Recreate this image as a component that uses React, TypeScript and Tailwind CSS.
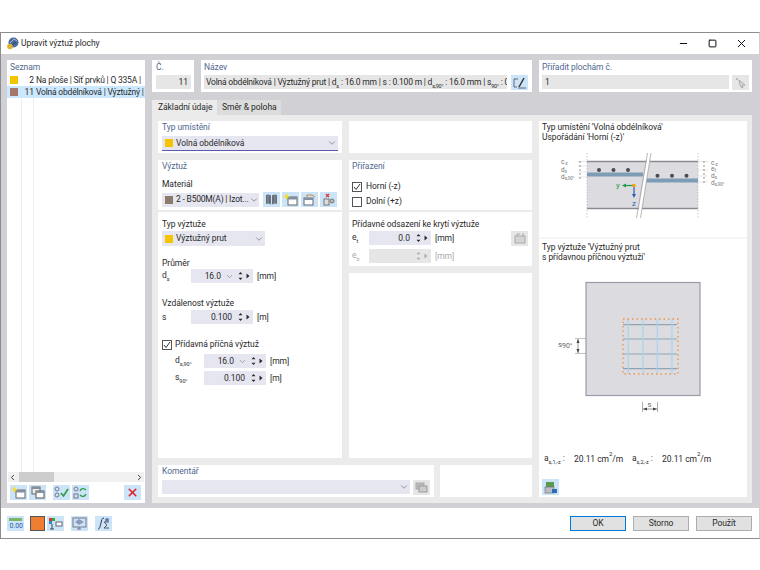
import { ReactNode } from "react";
import { ChevronDown, ChevronLeft, ChevronRight, Minus, Square, X } from "lucide-react";

const Sub = ({ children }: { children: ReactNode }) => (
  <sub className="text-[5.5px] leading-none align-[-2px]">{children}</sub>
);

const Label = ({ children, className = "" }: { children: ReactNode; className?: string }) => (
  <div className={`text-[#50688f] leading-[12px] ${className}`}>{children}</div>
);

const Card = ({ children, className = "" }: { children?: ReactNode; className?: string }) => (
  <div className={`bg-white ${className}`}>{children}</div>
);

const Swatch = ({ color, size = "w-[8px] h-[8px]" }: { color: string; size?: string }) => (
  <span className={`inline-block shrink-0 ${size}`} style={{ backgroundColor: color }} />
);

function Select({ color, text, className = "" }: { color?: string; text?: string; className?: string }) {
  return (
    <div className={`flex items-center bg-[#e6e6f0] pl-[3px] pr-[1px] ${className}`}>
      {color && <Swatch color={color} />}
      <span className="ml-[3px] flex-1 whitespace-nowrap">{text}</span>
      <ChevronDown size={10} strokeWidth={1.4} className="text-[#555] shrink-0" />
    </div>
  );
}

function Spin({ value, dropdown, disabled, className = "" }: { value: string; dropdown?: boolean; disabled?: boolean; className?: string }) {
  const tone = disabled ? "text-[#aaa]" : "text-[#2a2a2a]";
  return (
    <div className={`flex items-center justify-end h-[14px] w-[62px] ${disabled ? "bg-[#e6e6e6]" : "bg-[#e6e6f0]"} ${tone} ${className}`}>
      <span className={dropdown ? "mr-[4px]" : "mr-[6px]"}>{value}</span>
      {dropdown && <ChevronDown size={9} strokeWidth={1.4} className="mr-[4px] text-[#666]" />}
      <svg width="5" height="10" viewBox="0 0 5 10" className="mr-[3px]" fill="currentColor">
        <path d="M2.500 1 L4.500 3.200 H.5Z M2.500 9 L4.500 6.800 H.5Z" />
      </svg>
      <svg width="4" height="6" viewBox="0 0 4 6" className="mr-[3px]" fill="currentColor">
        <path d="M.5 .5 L3.500 3 L.5 5.500Z" />
      </svg>
    </div>
  );
}

function Check({ checked }: { checked?: boolean }) {
  return (
    <span className="w-[10px] h-[10px] border border-[#555] bg-white shrink-0 flex items-center justify-center">
      {checked && (
        <svg width="8" height="8" viewBox="0 0 8 8" fill="none" stroke="#333" strokeWidth="1">
          <path d="M1 4 L3 6.500 L7 1" />
        </svg>
      )}
    </span>
  );
}

const IconBtn = ({ children, gray, className = "" }: { children: ReactNode; gray?: boolean; className?: string }) => (
  <span className={`flex items-center justify-center shrink-0 w-[17px] h-[15px] ${gray ? "bg-[#e6e6e6]" : "bg-[#cce4f7]"} ${className}`}>
    {children}
  </span>
);

const NewWin = () => (
  <svg width="15" height="13" viewBox="0 0 15 13">
    <rect x="5" y="4" width="9" height="8" fill="#fff" stroke="#666" />
    <rect x="5" y="4" width="9" height="2.500" fill="#8490a0" />
    <path d="M3.500 0 L4.500 2.500 L7 3.500 L4.500 4.500 L3.500 7 L2.500 4.500 L0 3.500 L2.500 2.500Z" fill="#f7dc2a" />
  </svg>
);
const CopyWin = () => (
  <svg width="14" height="13" viewBox="0 0 14 13">
    <rect x="1" y="1" width="8" height="7" fill="#eee" stroke="#666" />
    <rect x="1" y="1" width="8" height="2" fill="#8490a0" />
    <rect x="5" y="5" width="8" height="7" fill="#fff" stroke="#555" />
    <rect x="5" y="5" width="8" height="2" fill="#8490a0" />
  </svg>
);
const SetCheck = () => (
  <svg width="15" height="13" viewBox="0 0 15 13" fill="none">
    <circle cx="3" cy="3" r="2" stroke="#778" />
    <circle cx="3" cy="9" r="2" stroke="#778" />
    <path d="M7 7 L9.500 10 L14 3" stroke="#2c9c3c" strokeWidth="1.6" />
  </svg>
);
const SetSwap = () => (
  <svg width="15" height="13" viewBox="0 0 15 13" fill="none">
    <circle cx="3" cy="3" r="2" stroke="#778" />
    <rect x="1" y="8" width="4" height="4" stroke="#778" />
    <path d="M7 5 C8 2 11 2 13 4 M13 8 C12 11 9 11 7 9" stroke="#2c9c3c" strokeWidth="1.3" />
  </svg>
);
const Book = () => (
  <svg width="13" height="11" viewBox="0 0 13 11">
    <path d="M1 1 Q3.500 0 6 1.500 V10.500 Q3.500 9 1 10Z M7 1.500 Q9.500 0 12 1 V10 Q9.500 9 7 10.500Z" fill="#666e7a" />
    <path d="M3 1 V9.500 M10 1 V9.500" stroke="#9aa2ae" strokeWidth=".7" />
  </svg>
);
const EditBox = () => (
  <svg width="14" height="12" viewBox="0 0 14 12" fill="none">
    <path d="M5 2 H1 V10 H4" stroke="#667" />
    <path d="M6 10 L11 1" stroke="#333" strokeWidth="1.500" />
    <path d="M5 11 H13" stroke="#667" />
  </svg>
);
const Tool = () => (
  <svg width="13" height="12" viewBox="0 0 13 12">
    <rect x="1" y="4" width="9" height="7" fill="#fff" stroke="#667" />
    <rect x="1" y="4" width="9" height="2" fill="#8490a0" />
    <path d="M4 3 V1 H9 L12 3" stroke="#c88a3a" fill="none" />
  </svg>
);
const XTool = () => (
  <svg width="13" height="13" viewBox="0 0 13 13">
    <path d="M4 1 L7 4 M7 1 L4 4" stroke="#d33" strokeWidth="1.200" />
    <rect x="2" y="6" width="5" height="6" fill="#ddd" stroke="#777" />
    <circle cx="10" cy="8" r="2" fill="#bbb" stroke="#777" />
  </svg>
);
const GrayStack = () => (
  <svg width="13" height="11" viewBox="0 0 13 11">
    <rect x="1" y="1" width="8" height="6" fill="#bbb" stroke="#aaa" />
    <rect x="4" y="4" width="8" height="6" fill="#ccc" stroke="#999" />
  </svg>
);
const GrayTool = () => (
  <svg width="12" height="12" viewBox="0 0 12 12">
    <rect x="1" y="4" width="10" height="7" fill="#d4d4d4" stroke="#aaa" />
    <path d="M3 4 V2 H6 M9 4 V1" stroke="#aaa" fill="none" />
  </svg>
);
const GrayPointer = () => (
  <svg width="12" height="12" viewBox="0 0 12 12">
    <path d="M1 1 L3 3 M3 1 L1 3" stroke="#bbb" />
    <path d="M4 3 L10 8 L7 8.500 L8 11 L6 10 L5 8Z" fill="#d8d8d8" stroke="#aaa" />
  </svg>
);

function List() {
  const rows = [
    { color: "#f5c400", no: "2", text: "Na ploše | Síť prvků | Q 335A |", sel: false },
    { color: "#a5776a", no: "11", text: "Volná obdélníková | Výztužný |", sel: true },
  ];
  return (
    <Card className="w-[138px] flex flex-col">
      <Label className="pl-[3px] h-[14px] flex items-center">Seznam</Label>
      <div className="flex-1 flex flex-col relative overflow-hidden">
        {rows.map((r) => (
          <div key={r.no} className={`flex items-center h-[12px] shrink-0 ${r.sel ? "bg-[#cce8ff]" : ""}`}>
            <span className="w-[15px] pl-[3px] flex"><Swatch color={r.color} /></span>
            <span className="w-[12px] text-right">{r.no}</span>
            <span className="ml-[2px] whitespace-nowrap flex-1 tracking-[-0.2px]">{r.text}</span>
          </div>
        ))}
        <div className="flex-1 flex">
          <span className="w-[15px] border-r border-[#eee]" />
          <span className="w-[12px] border-r border-[#eee]" />
        </div>
      </div>
      <div className="flex items-center h-[10px] bg-[#f0f0f0] mx-px justify-between">
        <ChevronLeft size={9} strokeWidth={2.500} className="text-[#333]" />
        <span className="w-[35px] h-full bg-[#cdcdcd] mr-auto ml-[2px]" />
        <ChevronRight size={9} strokeWidth={2.500} className="text-[#333]" />
      </div>
      <div className="flex items-center h-[21px] px-[3px] gap-[2px]">
        <IconBtn><NewWin /></IconBtn>
        <IconBtn><CopyWin /></IconBtn>
        <IconBtn className="ml-[5px]"><SetCheck /></IconBtn>
        <IconBtn><SetSwap /></IconBtn>
        <IconBtn className="ml-auto mr-[1px]"><X size={13} strokeWidth={3} className="text-[#e0202a]" /></IconBtn>
      </div>
    </Card>
  );
}

function HeaderRow() {
  return (
    <div className="flex gap-[7px] h-[32px] pr-[7px]">
      <Card className="w-[42px] px-[4px]">
        <div className="text-[#50688f] leading-[14px] h-[15px]">Č.</div>
        <div className="bg-[#e6e6e6] h-[14px] leading-[14px] text-right pr-[3px] mr-[-1px]">11</div>
      </Card>
      <Card className="w-[331px] pl-[3px] pr-[4px]">
        <div className="text-[#50688f] leading-[14px] h-[15px]">Název</div>
        <div className="flex gap-[4px]">
          <div className="flex-1 min-w-0 bg-[#e6e6e6] h-[14px] leading-[14px] pl-[2px] whitespace-nowrap overflow-hidden tracking-[-0.2px]">
            Volná obdélníková | Výztužný prut | d<Sub>s</Sub> : 16.0 mm | s : 0.100 m | d<Sub>s,90°</Sub> : 16.0 mm | s<Sub>90°</Sub> : 0
          </div>
          <IconBtn className="h-[14px]"><EditBox /></IconBtn>
        </div>
      </Card>
      <Card className="flex-1 px-[3px]">
        <div className="text-[#50688f] leading-[14px] h-[15px]">Přiřadit plochám č.</div>
        <div className="flex gap-[3px]">
          <div className="flex-1 bg-[#e6e6e6] h-[14px] leading-[14px] pl-[3px]">1</div>
          <IconBtn gray className="h-[14px]"><GrayPointer /></IconBtn>
        </div>
      </Card>
    </div>
  );
}

function LeftColumn() {
  return (
    <div className="w-[184px] flex flex-col">
      <Card className="h-[32px] px-[4px]">
        <Label className="h-[15px]">Typ umístění</Label>
        <Select color="#f5c400" text="Volná obdélníková" className="h-[15px] border-b border-[#5a5aa8]" />
      </Card>
      <Card className="h-[50px] mt-[7px] px-[4px]">
        <Label className="h-[18px]">Výztuž</Label>
        <div className="leading-[12px] h-[14px]">Materiál</div>
        <div className="flex items-center gap-[2px]">
          <Select color="#8c7b6b" text="2 - B500M(A) | Izot..." className="w-[97px] h-[14px] mr-[2px] tracking-[-0.2px]" />
          <IconBtn className="h-[14px]"><Book /></IconBtn>
          <IconBtn className="h-[14px]"><NewWin /></IconBtn>
          <IconBtn className="h-[14px]"><Tool /></IconBtn>
          <IconBtn className="h-[14px]"><XTool /></IconBtn>
        </div>
      </Card>
      <Card className="flex-1 mt-[2px] px-[4px] pt-[5px]">
        <div className="leading-[14px] h-[14px]">Typ výztuže</div>
        <Select color="#f5c400" text="Výztužný prut" className="w-[103px] h-[15px]" />
        <div className="leading-[14px] mt-[10px] h-[13px]">Průměr</div>
        <div className="flex items-center h-[14px]">
          <span className="w-[29px]">d<Sub>s</Sub></span>
          <Spin value="16.0" dropdown />
          <span className="ml-[4px]">[mm]</span>
        </div>
        <div className="leading-[14px] mt-[13px] h-[14px]">Vzdálenost výztuže</div>
        <div className="flex items-center h-[14px]">
          <span className="w-[29px]">s</span>
          <Spin value="0.100" />
          <span className="ml-[4px]">[m]</span>
        </div>
        <div className="flex items-center gap-[3px] mt-[15px] h-[11px]">
          <Check checked />
          <span>Přídavná příčná výztuž</span>
        </div>
        <div className="flex items-center h-[14px] mt-[4px] pl-[13px]">
          <span className="w-[29px]">d<Sub>s,90°</Sub></span>
          <Spin value="16.0" dropdown />
          <span className="ml-[4px]">[mm]</span>
        </div>
        <div className="flex items-center h-[14px] mt-[3px] pl-[13px]">
          <span className="w-[29px]">s<Sub>90°</Sub></span>
          <Spin value="0.100" />
          <span className="ml-[4px]">[m]</span>
        </div>
      </Card>
    </div>
  );
}

function MiddleColumn() {
  return (
    <div className="w-[183px] flex flex-col">
      <Card className="h-[32px]" />
      <Card className="h-[50px] mt-[7px] px-[3px]">
        <Label className="h-[21px]">Přiřazení</Label>
        <div className="flex items-center gap-[4px] h-[11px]">
          <Check checked />
          <span>Horní (-z)</span>
        </div>
        <div className="flex items-center gap-[4px] h-[11px] mt-[4px]">
          <Check />
          <span>Dolní (+z)</span>
        </div>
      </Card>
      <Card className="h-[54px] mt-[2px] px-[3px] pt-[5px]">
        <div className="leading-[14px] h-[14px]">Přídavné odsazení ke krytí výztuže</div>
        <div className="flex items-center h-[14px]">
          <span className="w-[17px]">e<Sub>t</Sub></span>
          <Spin value="0.0" />
          <span className="ml-[4px]">[mm]</span>
          <IconBtn gray className="h-[14px] ml-auto mr-[1px]"><GrayTool /></IconBtn>
        </div>
        <div className="flex items-center h-[14px] mt-[4px] text-[#aaa]">
          <span className="w-[17px]">e<Sub>b</Sub></span>
          <Spin value="" disabled />
          <span className="ml-[4px]">[mm]</span>
        </div>
      </Card>
      <Card className="flex-1 mt-[7px]" />
    </div>
  );
}

function BeamDrawing() {
  return (
    <svg width="208" height="72" viewBox="539 150 208 72" className="block mx-auto">
      <rect x="587" y="161" width="111" height="48" fill="#dcdce0" />
      <path d="M587 161.500 H698 M587 208.500 H698" stroke="#8a8a93" strokeWidth="1.400" />
      <path d="M587 153 V218 M698 153 V218" stroke="#aaa" strokeWidth=".6" strokeDasharray="1.500 1.500" />
      <path d="M578 161.500 H587 M578 166 H587 M578 172 H587 M578 177 H587" stroke="#ccc" strokeWidth=".5" />
      <path d="M698 161.500 H708 M698 170 H708 M698 176 H708 M698 182 H708" stroke="#ccc" strokeWidth=".5" />
      <path d="M580 161 V180 M704 161 V184" stroke="#666" strokeWidth=".7" strokeDasharray="2 2" />
      <rect x="587" y="172.500" width="56" height="4" fill="#7f9cb6" />
      <rect x="645" y="178.500" width="53" height="4" fill="#7f9cb6" />
      {[599, 613.5, 628].map((x) => (
        <circle key={x} cx={x} cy="170" r="2" fill="#4a4a58" />
      ))}
      {[657.5, 672, 686.5].map((x) => (
        <circle key={x} cx={x} cy="175.700" r="2" fill="#4a4a58" />
      ))}
      <path d="M648 153 L637.500 218 H640.500 L651 153Z" fill="#fff" />
      <path d="M647.500 153 L636.500 218 M651 153 L640.500 218" stroke="#999" strokeWidth=".7" />
      <path d="M633 185.500 H625" stroke="#1c9a4a" strokeWidth="1.200" />
      <path d="M622 185.500 L626 183.500 V187.500Z" fill="#1c9a4a" />
      <path d="M634 186 V195" stroke="#2c5fb8" strokeWidth="1.200" />
      <path d="M634 198 L632 194 H636Z" fill="#2c5fb8" />
      <rect x="632.500" y="184" width="3" height="3" fill="#f5a400" />
      <text x="616" y="188" fontSize="8" fill="#1c9a4a">y</text>
      <text x="632" y="206" fontSize="8" fill="#2c5fb8">z</text>
      <g fontSize="6.500" fill="#777">
        <text x="561" y="164">c<tspan fontSize="4.500" dy="1">-z</tspan></text>
        <text x="561" y="172">d<tspan fontSize="4.500" dy="1">s</tspan></text>
        <text x="561" y="179">d<tspan fontSize="4.500" dy="1">s,90°</tspan></text>
        <text x="711" y="165">c<tspan fontSize="4.500" dy="1">-z</tspan></text>
        <text x="711" y="171">e<tspan fontSize="4.500" dy="1">t</tspan></text>
        <text x="711" y="178">d<tspan fontSize="4.500" dy="1">s</tspan></text>
        <text x="711" y="184.500">d<tspan fontSize="4.500" dy="1">s,90°</tspan></text>
      </g>
    </svg>
  );
}

function PlateDrawing() {
  return (
    <svg width="208" height="140" viewBox="539 278 208 140" className="block mx-auto">
      <rect x="586" y="283.500" width="114" height="113" fill="#dcdce0" stroke="#9a9aa8" strokeWidth="1.200" />
      {[325.7, 340, 355, 369.7].map((y) => (
        <path key={y} d={`M623 ${y} H677`} stroke="#8fa3b5" strokeWidth="1.200" />
      ))}
      {[628.3, 643, 657.3, 672].map((x) => (
        <path key={x} d={`M${x} 320 V375`} stroke="#a9d3f0" strokeWidth="1.200" />
      ))}
      <rect x="623" y="320" width="55" height="55" fill="none" stroke="#f0924a" strokeWidth="1.300" strokeDasharray="1.500 3" />
      <path d="M575 339.500 H586 M575 354.500 H586" stroke="#999" strokeWidth=".6" />
      <path d="M578 340 V354" stroke="#555" strokeWidth=".6" />
      <path d="M578 340 L576.500 344 H579.500Z M578 354 L576.500 350 H579.500Z" fill="#444" />
      <text x="558" y="348" fontSize="8" fill="#666">s<tspan fontSize="7" dy="1">90°</tspan></text>
      <path d="M642.500 403 V413 M657.500 403 V413" stroke="#777" strokeWidth=".6" />
      <path d="M643 410 H657" stroke="#555" strokeWidth=".6" />
      <path d="M643 410 L647 408.500 V411.500Z M657 410 L653 408.500 V411.500Z" fill="#444" />
      <text x="647.500" y="408" fontSize="7.500" fill="#666">s</text>
    </svg>
  );
}

function RightColumn() {
  return (
    <Card className="w-[208px] flex flex-col">
      <div className="h-[118px] border-b-2 border-[#f5f5f5] px-[3px] pt-[1px] leading-[9.500px]">
        <div className="pt-[1px]">Typ umístění 'Volná obdélníková'</div>
        <div>Uspořádání 'Horní (-z)'</div>
        <div className="mt-[8px] -mx-[3px]"><BeamDrawing /></div>
      </div>
      <div className="px-[3px] pt-[3px] leading-[9.500px]">
        <div className="pt-[1px]">Typ výztuže 'Výztužný prut</div>
        <div>s přídavnou příčnou výztuží'</div>
        <div className="mt-[15px] -mx-[3px]"><PlateDrawing /></div>
      </div>
      <div className="flex px-[5px] mt-[36px] h-[12px] items-center">
        <span className="w-[30px]">a<Sub>s,1,-z</Sub> :</span>
        <span className="w-[58px]">20.11 cm<sup className="text-[6px] align-[3px] leading-none">2</sup>/m</span>
        <span className="w-[30px]">a<Sub>s,2,-z</Sub> :</span>
        <span>20.11 cm<sup className="text-[6px] align-[3px] leading-none">2</sup>/m</span>
      </div>
      <IconBtn className="ml-[3px] mt-auto mb-[2px] h-[16px]">
        <svg width="14" height="13" viewBox="0 0 14 13">
          <rect x="2" y="1" width="8" height="6" fill="#5a9a4a" />
          <rect x="1" y="6" width="9" height="6" fill="#b9bcc4" stroke="#667" strokeWidth=".6" />
          <rect x="8" y="8" width="5" height="4" fill="#2c6cb8" />
        </svg>
      </IconBtn>
    </Card>
  );
}

const Btn = ({ children, primary }: { children: ReactNode; primary?: boolean }) => (
  <span className={`w-[56px] h-[15px] flex items-center justify-center bg-[#e1e1e1] border ${primary ? "border-[#0078d7] border-[1.5px]" : "border-[#adadad]"}`}>
    {children}
  </span>
);

export default function App() {
  return (
    <div className="w-[760px] h-[570px] bg-white pt-[32px] text-[8.5px] tracking-[-0.05px] text-[#2a2a2a] font-['Roboto',sans-serif] leading-none">
      <div className="h-[507px] flex flex-col border-t border-b border-l border-r border-[#8c8c8c] border-r-[#d0d0d0]">
        <div className="h-[21px] flex items-center shrink-0">
          <svg width="13" height="13" viewBox="0 0 13 13" className="ml-[5px]">
            <circle cx="7.500" cy="5.500" r="5" fill="#4a6aa0" />
            <path d="M4 6 L8 2 L11 4" stroke="#a9bbd4" fill="none" />
            <path d="M6 8 L10 5" stroke="#27406e" />
            <circle cx="4" cy="9.500" r="2.800" fill="#e0b030" />
          </svg>
          <span className="ml-[2px] whitespace-nowrap">Upravit výztuž plochy</span>
          <div className="ml-auto flex items-center text-[#111]">
            <Minus size={11} strokeWidth={1} absoluteStrokeWidth className="w-[29px]" />
            <Square size={9} strokeWidth={1} absoluteStrokeWidth className="w-[29px]" />
            <X size={13} strokeWidth={1} absoluteStrokeWidth className="w-[29px] mr-[3px]" />
          </div>
        </div>
        <div className="h-[454px] shrink-0 bg-[#d0d0d5] flex gap-[7px] pl-[6px] pt-[6px] pb-[5px]">
          <List />
          <div className="flex-1 flex flex-col min-w-0">
            <HeaderRow />
            <div className="flex mt-[8px] h-[15px] shrink-0 items-center whitespace-nowrap">
              <span className="w-[65px] h-full bg-[#ebebeb] flex items-center pl-[6px]">Základní údaje</span>
              <span className="w-[64px] h-full bg-[#dcdcdc] flex items-center pl-[5px]">Směr &amp; poloha</span>
            </div>
            <div className="flex-1 bg-[#ebebeb] mr-[7px] p-[6px] pr-[6px] flex gap-[7px] min-h-0">
              <div className="w-[374px] flex flex-col gap-[7px]">
                <div className="flex-1 flex gap-[7px] min-h-0">
                  <LeftColumn />
                  <MiddleColumn />
                </div>
                <div className="h-[32px] flex gap-[6px] shrink-0">
                  <Card className="w-[276px] px-[4px]">
                    <Label className="h-[15px]">Komentář</Label>
                    <div className="flex gap-[3px]">
                      <Select className="flex-1 h-[14px]" />
                      <IconBtn gray className="h-[14px]"><GrayStack /></IconBtn>
                    </div>
                  </Card>
                  <Card className="flex-1" />
                </div>
              </div>
              <RightColumn />
            </div>
          </div>
        </div>
        <div className="flex-1 flex items-center pl-[6px] pr-[7px]">
          <IconBtn>
            <svg width="15" height="13" viewBox="0 0 15 13">
              <rect x="1" y="1" width="13" height="3" fill="#7cb46a" />
              <text x="1.500" y="11" fontSize="7" fill="#2c5fa8">0.00</text>
            </svg>
          </IconBtn>
          <span className="w-[15px] h-[15px] bg-[#ed7d31] border border-[#555] ml-[6px]" />
          <IconBtn className="ml-[2px]">
            <svg width="15" height="13" viewBox="0 0 15 13">
              <rect x="1" y="1" width="3" height="3" fill="#d33" />
              <rect x="4" y="1" width="3" height="3" fill="#3a3" />
              <rect x="1" y="4" width="3" height="3" fill="#38c" />
              <path d="M4 7 V12 M2 12 H6" stroke="#445" />
              <rect x="8" y="5" width="6" height="4" fill="#fff" stroke="#667" />
            </svg>
          </IconBtn>
          <IconBtn className="ml-[7px]">
            <svg width="15" height="13" viewBox="0 0 15 13" fill="none">
              <rect x="1" y="1" width="13" height="9" stroke="#778" />
              <path d="M3 5 L7 2 L12 5 L7 8Z" fill="#8a9ab8" />
              <path d="M7 10 V12 M5 12 H9" stroke="#778" />
            </svg>
          </IconBtn>
          <IconBtn className="ml-[7px]">
            <svg width="15" height="13" viewBox="0 0 15 13" fill="none">
              <path d="M2 12 C4 12 4 9 5 6 C5.500 3 6 1 8 1" stroke="#334" />
              <path d="M8 5 H13 M8 11 H13 M8 5 L11 8 L8 11" stroke="#556" />
              <circle cx="11" cy="3" r="2" fill="#6a7ab0" />
            </svg>
          </IconBtn>
          <div className="ml-auto flex gap-[7px]">
            <Btn primary>OK</Btn>
            <Btn>Storno</Btn>
            <Btn>Použít</Btn>
          </div>
        </div>
      </div>
    </div>
  );
}
